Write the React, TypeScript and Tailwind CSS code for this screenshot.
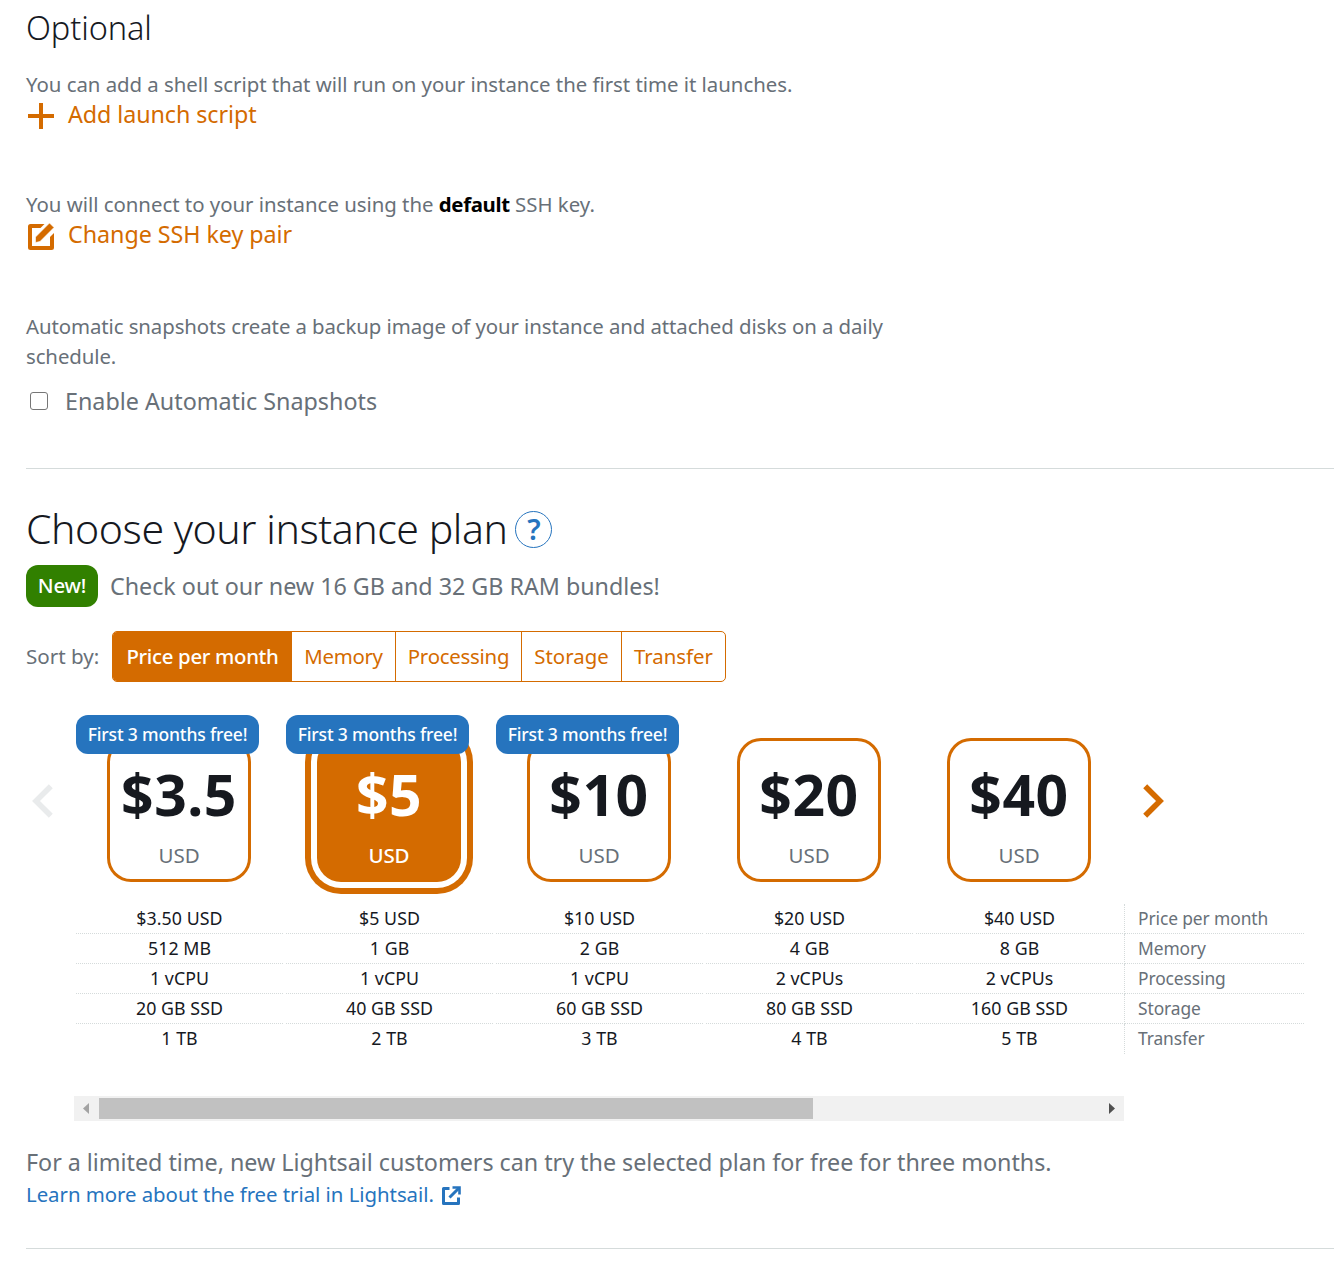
import React from "react";

const sortOptions = [
  { label: "Price per month", cls: "w-[179px] bg-[#d46b00] font-medium text-white tracking-[-0.33px]" },
  { label: "Memory", cls: "w-[104px] border-r border-[#d46b00] tracking-[-0.3px]" },
  { label: "Processing", cls: "w-[126px] border-r border-[#d46b00] tracking-[-0.25px]" },
  { label: "Storage", cls: "w-[100px] border-r border-[#d46b00]" },
  { label: "Transfer", cls: "w-[103px]" },
];

const plans = [
  { price: "$3.5", promo: true, selected: false, specs: ["$3.50 USD", "512 MB", "1 vCPU", "20 GB SSD", "1 TB"] },
  { price: "$5", promo: true, selected: true, specs: ["$5 USD", "1 GB", "1 vCPU", "40 GB SSD", "2 TB"] },
  { price: "$10", promo: true, selected: false, specs: ["$10 USD", "2 GB", "1 vCPU", "60 GB SSD", "3 TB"] },
  { price: "$20", promo: false, selected: false, specs: ["$20 USD", "4 GB", "2 vCPUs", "80 GB SSD", "4 TB"] },
  { price: "$40", promo: false, selected: false, specs: ["$40 USD", "8 GB", "2 vCPUs", "160 GB SSD", "5 TB"] },
];

const specLabels = ["Price per month", "Memory", "Processing", "Storage", "Transfer"];

function Chevron({ left = false }: { left?: boolean }) {
  return (
    <svg
      width="22"
      height="34"
      viewBox="0 0 22 34"
      fill="none"
      stroke={left ? "#e9ebec" : "#d46b00"}
      strokeWidth="5.6"
      className={left ? "-scale-x-100" : ""}
    >
      <path d="M2.200 2.200 17 17 2.200 31.800" />
    </svg>
  );
}

function PlanCard({ price, promo, selected }: { price: string; promo: boolean; selected: boolean }) {
  return (
    <div className="relative h-[189px] pt-[23px] pl-[31px]">
      <div
        className={
          selected
            ? "h-36 w-36 rounded-3xl bg-[#d46b00] text-center text-white shadow-[0_0_0_6px_#fff,0_0_0_12px_#d46b00]"
            : "h-36 w-36 rounded-3xl text-center text-[#687078] shadow-[inset_0_0_0_3px_#d46b00]"
        }
      >
        <div
          className={
            selected
              ? "h-[91px] pt-[21px] text-[57px] leading-[70px] font-bold tracking-[0.5px]"
              : "h-[91px] pt-[21px] text-[57px] leading-[70px] font-bold tracking-[0.5px] text-[#16191f]"
          }
        >
          {price}
        </div>
        <div className={selected ? "mt-[10px] text-[20.5px] leading-8 font-medium tracking-[-0.2px]" : "mt-[10px] text-[20.5px] leading-8"}>
          USD
        </div>
      </div>
      {promo && (
        <div className="absolute top-0 left-0 h-[39px] w-[183px] rounded-xl bg-[#2674be] text-center text-[17.5px] leading-[38px] font-medium tracking-[-0.16px] text-white">
          First 3 months free!
        </div>
      )}
    </div>
  );
}

export default function App() {
  return (
    <main className="h-[1270px] w-[1342px] overflow-hidden bg-white pr-2 pl-[26px] font-['Noto_Sans','Open_Sans',sans-serif] text-[20.4px] leading-[30px] whitespace-nowrap text-[#687078]">
      <section className="h-[469px] border-b border-[#d5dbdb]">
        <h2 className="h-[69px] text-[32.5px] leading-[56px] font-light tracking-[-0.1px] text-[#16191f]">Optional</h2>

        <p className="tracking-[-0.03px]">You can add a shell script that will run on your instance the first time it launches.</p>
        <a className="flex h-[30px] gap-3 text-[23.3px] leading-[31px] tracking-[-0.08px] text-[#d46b00]">
          <svg width="30" height="30" viewBox="0 0 30 30" fill="none" stroke="currentColor" strokeWidth="4" className="mt-[2px]">
            <path d="M2 15h26M15 2v26" />
          </svg>
          Add launch script
        </a>

        <p className="mt-[60px]">
          <span className="tracking-[-0.02px]">You will connect to your instance using the</span>{" "}
          <b className="font-bold tracking-[-0.35px] text-[#000]">default</b> SSH key.
        </p>
        <a className="flex h-[30px] gap-3 text-[23.3px] leading-[31px] tracking-[-0.05px] text-[#d46b00]">
          <svg width="30" height="30" viewBox="0 0 30 30" fill="currentColor" className="mt-[2px]">
            <path d="M18.500 3H4.500Q2 3 2 5.500v21Q2 29 4.500 29h21Q28 29 28 26.500V12L24 16v9H6V7h8.500Z" />
            <path d="M9.500 21.500V16L23.500 2 28 6.500 14 20.500Z" stroke="#fff" strokeWidth="0.600" />
          </svg>
          Change SSH key pair
        </a>

        <p className="mt-[62px] tracking-[-0.09px]">
          Automatic snapshots create a backup image of your instance and attached disks on a daily
          <br />
          schedule.
        </p>
        <label className="mt-[15px] flex h-[30px] items-center gap-[17px] pl-1 text-[23.3px] leading-[30px]">
          <span className="h-[18px] w-[18px] rounded-[3px] border-[1.5px] border-[#767676] bg-white" />
          Enable Automatic Snapshots
        </label>
      </section>

      <section className="h-[780px] border-b border-[#d5dbdb] pt-[29px]">
        <h1 className="flex h-[60px] items-center text-[41px] leading-[60px] font-light tracking-[-0.44px] text-[#16191f]">
          <span className="-mt-px w-[489px]">Choose your instance plan</span>
          <span className="mt-[3px] flex h-[37px] w-[37px] items-center justify-center rounded-full border-[1.5px] border-[#2674be] pb-[2px] pl-px text-[29px] leading-none font-semibold tracking-normal text-[#2674be]">
            ?
          </span>
        </h1>

        <div className="mt-[7px] flex h-[42px] items-center gap-3">
          <span className="h-[42px] w-[72px] rounded-xl bg-[#318000] text-center leading-[40px] font-medium tracking-[-0.2px] text-white">New!</span>
          <span className="pb-px text-[23.3px] tracking-[-0.02px]">Check out our new 16 GB and 32 GB RAM bundles!</span>
        </div>

        <div className="mt-6 flex h-[51px] items-center">
          <span className="w-[86px] pb-[2px] text-[20.6px]">Sort by:</span>
          <div className="flex h-[51px] overflow-hidden rounded-[5px] border border-[#d46b00] text-center leading-[48px] text-[#d46b00]">
            {sortOptions.map((o) => (
              <span key={o.label} className={o.cls}>
                {o.label}
              </span>
            ))}
          </div>
        </div>

        <div className="mt-[33px] flex">
          <div className="w-[50px] pt-[69px] pl-[5px]">
            <Chevron left />
          </div>
          <div className="flex gap-[3px]">
            {plans.map((p) => (
              <div key={p.price} className="w-[207px]">
                <PlanCard price={p.price} promo={p.promo} selected={p.selected} />
                {p.specs.map((s) => (
                  <div
                    key={s}
                    className="h-[30px] border-b border-dotted border-[#d5dbdb] text-center text-[17.8px] leading-[29px] tracking-[0.05px] text-[#16191f] last:border-b-0"
                  >
                    {s}
                  </div>
                ))}
              </div>
            ))}
          </div>
          <div className="ml-px w-[180px]">
            <div className="h-[189px] pt-[69px] pl-[19px]">
              <Chevron />
            </div>
            {specLabels.map((s) => (
              <div
                key={s}
                className="h-[30px] border-b border-l border-dotted border-[#d5dbdb] pl-[13px] text-[17.4px] leading-[29px] tracking-[-0.1px] last:border-b-0"
              >
                {s}
              </div>
            ))}
          </div>
        </div>

        <div className="mt-[42px] ml-12 flex h-[25px] w-[1050px] items-center bg-[#f1f1f1]">
          <svg width="25" height="25" viewBox="0 0 25 25" fill="#a3a3a3">
            <path d="M9 12.500 15 7v11Z" />
          </svg>
          <div className="h-[21px] w-[714px] bg-[#c1c1c1]" />
          <svg width="25" height="25" viewBox="0 0 25 25" fill="#505050" className="ml-auto">
            <path d="M16 12.500 10 7v11Z" />
          </svg>
        </div>

        <p className="mt-[26px] text-[23.3px] leading-[31px] tracking-[-0.02px]">
          For a limited time, new Lightsail customers can try the selected plan for free for three months.
        </p>
        <a className="mt-px flex h-[30px] gap-[7px] tracking-[-0.04px] text-[#2674be]">
          Learn more about the free trial in Lightsail.
          <svg width="20" height="20" viewBox="0 0 20 20" fill="none" stroke="currentColor" strokeWidth="3" className="mt-[7px]">
            <path d="M8.500 2.500h-6v15h15v-6" strokeLinejoin="round" />
            <path d="M11.500 1.500h7v7" strokeWidth="2.600" />
            <path d="M18 2 8.500 11.500" />
          </svg>
        </a>
      </section>
    </main>
  );
}
